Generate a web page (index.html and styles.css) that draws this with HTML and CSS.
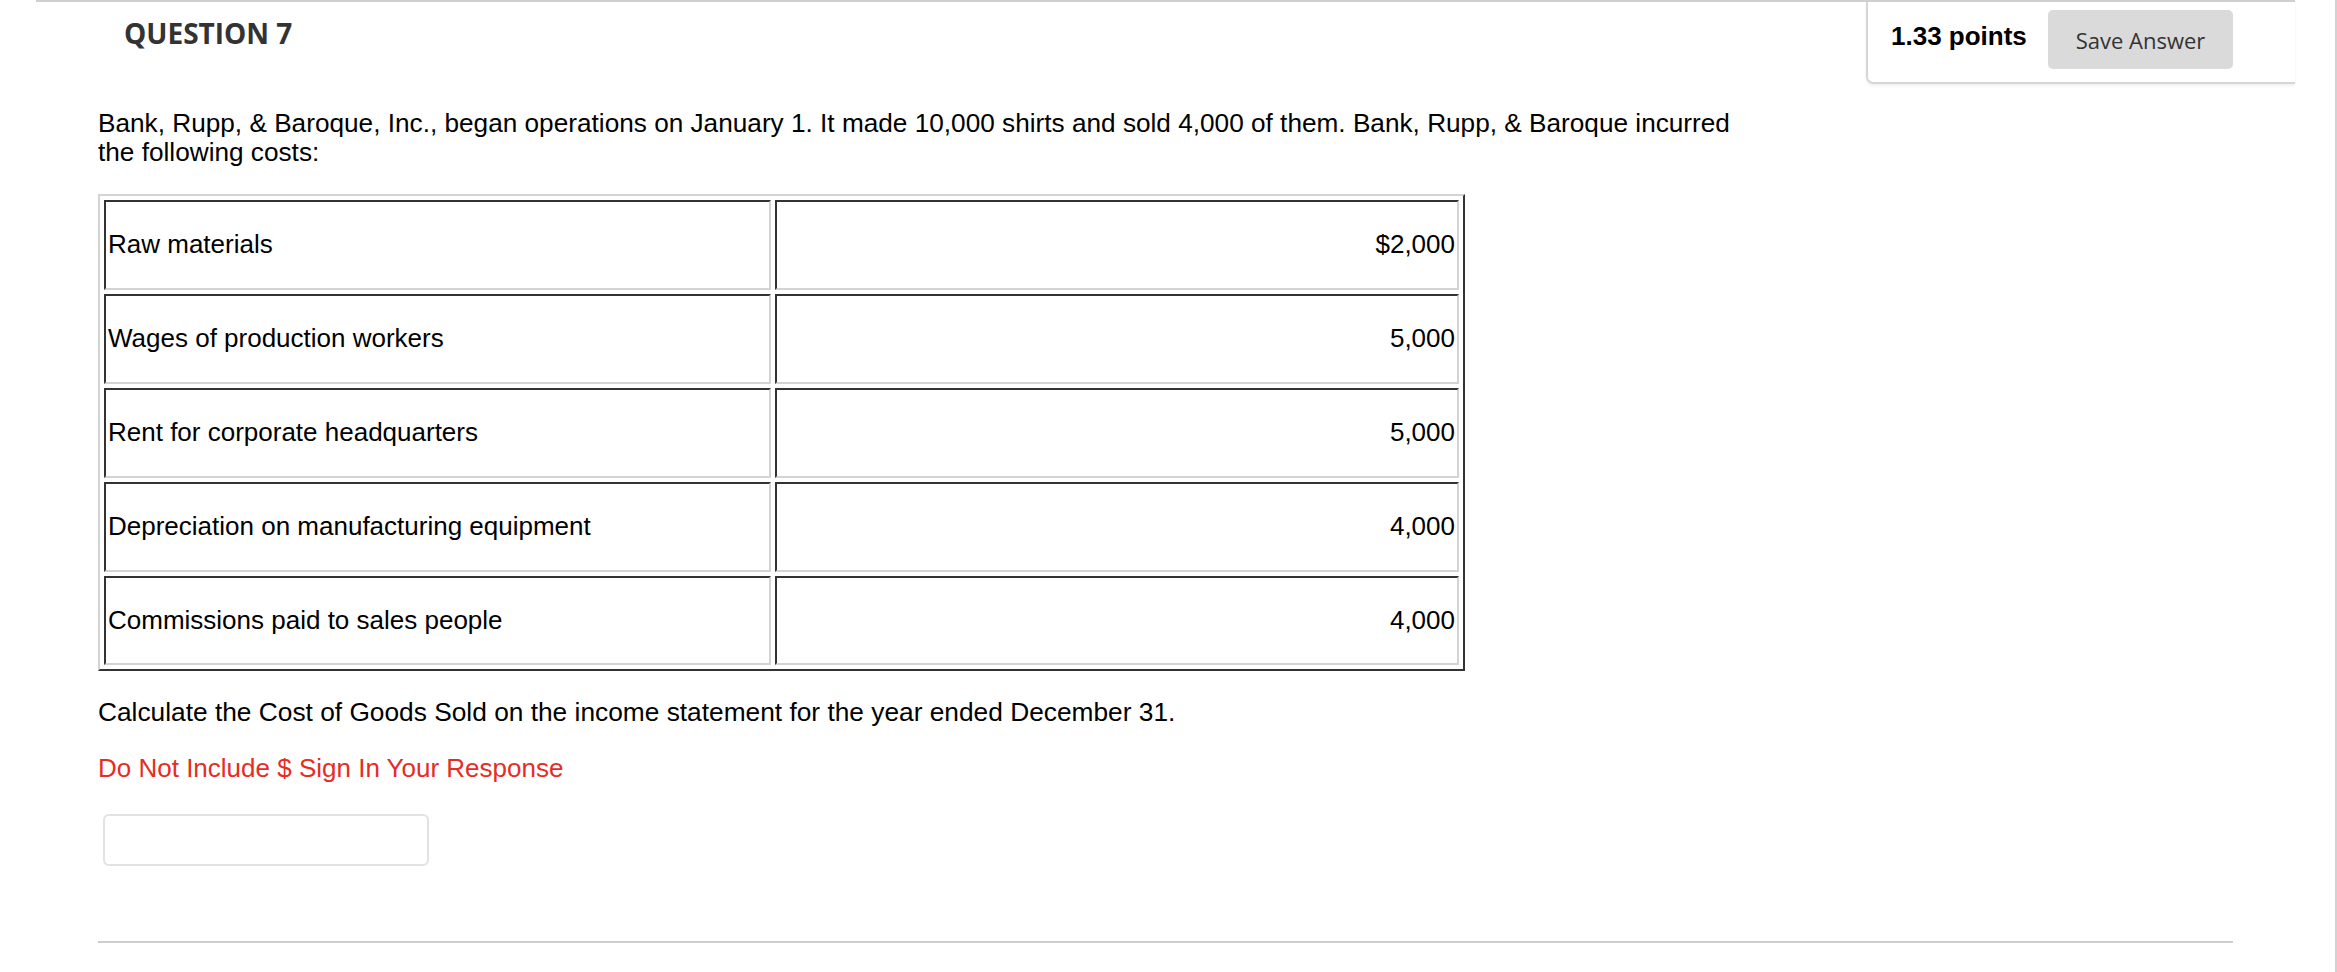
FILE: index.html
```html
<!DOCTYPE html>
<html lang="en">
<head>
<meta charset="utf-8">
<title>Question 7</title>
<link rel="stylesheet" href="styles.css">
</head>
<body>
<div class="page">
  <div class="question">
    <div class="q-header">
      <h2 class="q-title">QUESTION 7</h2>
      <div class="points-box">
        <span class="points">1.33 points</span>
        <button class="save-btn" type="button">Save Answer</button>
      </div>
    </div>
    <div class="q-body">
      <p class="q-text">Bank, Rupp, &amp; Baroque, Inc., began operations on January 1. It made 10,000 shirts and sold 4,000 of them. Bank, Rupp, &amp; Baroque incurred the following costs:</p>
      <table class="costs">
        <tbody>
          <tr><td class="label">Raw materials</td><td class="amount">$2,000</td></tr>
          <tr><td class="label">Wages of production workers</td><td class="amount">5,000</td></tr>
          <tr><td class="label">Rent for corporate headquarters</td><td class="amount">5,000</td></tr>
          <tr><td class="label">Depreciation on manufacturing equipment</td><td class="amount">4,000</td></tr>
          <tr><td class="label">Commissions paid to sales people</td><td class="amount">4,000</td></tr>
        </tbody>
      </table>
      <p class="q-prompt">Calculate the Cost of Goods Sold on the income statement for the year ended December 31.</p>
      <p class="q-note">Do Not Include $ Sign In Your Response</p>
      <input class="answer" type="text" aria-label="Answer">
      <hr class="q-divider">
    </div>
  </div>
</div>
</body>
</html>
```

FILE: styles.css
```css
html, body {
  margin: 0;
  padding: 0;
  background: #ffffff;
}

body {
  font-family: "Liberation Sans", Arial, Helvetica, sans-serif;
  color: #000000;
}

.page {
  width: 2337px;
  min-height: 972px;
  box-sizing: border-box;
  border-right: 2px solid #d2d2d2;
  padding-left: 36px;
}

.question {
  width: 2259px;
  border-top: 2px solid #cfcfcf;
}

.q-header {
  display: flex;
  justify-content: space-between;
  align-items: flex-start;
}

.q-title {
  margin: 0;
  padding: 12px 0 0 88px;
  font-family: "Open Sans", "Liberation Sans", sans-serif;
  font-weight: 700;
  font-size: 28px;
  line-height: 38px;
  color: #333333;
}

.points-box {
  width: 429px;
  box-sizing: border-box;
  display: flex;
  align-items: center;
  padding: 8px 62px 13px 23px;
  border-left: 2px solid #d6d6d6;
  border-bottom: 2px solid #d6d6d6;
  border-bottom-left-radius: 7px;
  box-shadow: 0 2px 3px rgba(0, 0, 0, 0.06);
}

.points {
  font-family: "Liberation Sans", Arial, sans-serif;
  font-weight: 700;
  font-size: 26px;
  color: #000000;
  position: relative;
  top: -3px;
}

.save-btn {
  margin-left: auto;
  width: 185px;
  height: 59px;
  padding: 0;
  border: none;
  border-radius: 5px;
  background: #dadada;
  font-family: "Open Sans", "Liberation Sans", sans-serif;
  font-size: 22px;
  color: #333333;
}

.q-body {
  padding: 0 62px;
}

.q-text {
  margin: 25px 0 27px;
  max-width: 1660px;
  font-size: 26.2px;
  line-height: 29px;
}

.costs {
  border-collapse: separate;
  border-spacing: 4px;
  border: 2px solid;
  border-color: #d3d3d3 #333333 #333333 #d3d3d3;
  width: 1367px;
}

.costs td {
  box-sizing: border-box;
  height: 89.9px;
  padding: 2px;
  border: 2px solid;
  border-color: #333333 #d3d3d3 #d3d3d3 #333333;
  font-size: 26px;
  vertical-align: middle;
}

.costs td.label {
  width: 667px;
  text-align: left;
}

.costs td.amount {
  text-align: right;
}

.q-prompt {
  margin: 27px 0 0;
  font-size: 26.3px;
  line-height: 29px;
}

.q-note {
  margin: 27px 0 0;
  font-size: 26px;
  line-height: 29px;
  color: #e52d24;
}

.answer {
  display: block;
  margin: 31px 0 0 5px;
  width: 326px;
  height: 52px;
  box-sizing: border-box;
  border: 2px solid #e2e2e2;
  border-radius: 6px;
  background: #ffffff;
}

.q-divider {
  margin: 75px 0 0;
  height: 0;
  border: 0;
  border-top: 2px solid #cdcdcd;
}
```
